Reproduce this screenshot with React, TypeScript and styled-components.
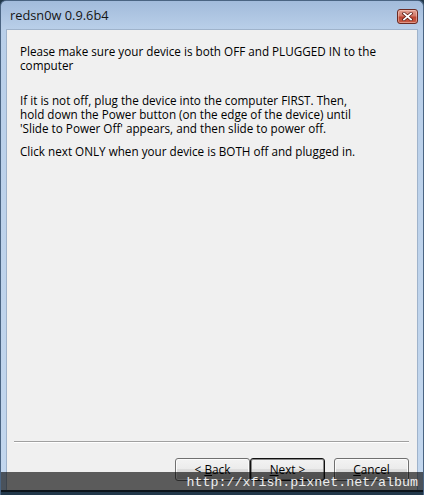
import React from 'react';
import styled, { createGlobalStyle } from 'styled-components';

const Global = createGlobalStyle`
  html, body { margin: 0; padding: 0; background: #22384a; }
  body { width: 424px; height: 495px; overflow: hidden; }
`;

const Window = styled.div`
  position: relative;
  width: 424px;
  height: 495px;
  box-sizing: border-box;
  display: flex;
  flex-direction: column;
  background: linear-gradient(to bottom, #a2bbdb 0px, #b9cfe9 28px, #c3d7ee 100%);
  border: 1px solid #4a6482;
  border-bottom: none;
  border-radius: 6px 6px 0 0;
  overflow: hidden;
`;

const TitleBar = styled.div`
  height: 28px;
  flex: none;
  display: flex;
  align-items: center;
  justify-content: space-between;
  padding: 0 5px 0 9px;
`;

const Title = styled.span`
  font-family: 'Open Sans', 'Noto Sans', sans-serif;
  font-size: 12.8px;
  color: #151515;
  padding-bottom: 1px;
`;

const CloseButton = styled.div`
  width: 21px;
  height: 15px;
  box-sizing: border-box;
  margin-top: 3px;
  border: 1px solid #6b2a22;
  border-radius: 3px;
  background: linear-gradient(to bottom, #e3a193 0%, #d27a69 45%, #bd4531 55%, #c75d47 100%);
  display: flex;
  align-items: center;
  justify-content: center;
  box-shadow: inset 0 0 0 1px rgba(255, 220, 210, 0.45);
`;

const Panel = styled.div`
  flex: 1;
  margin: 0 5px;
  background: #f0f0f0;
  border: 1px solid #9fb3cb;
  border-bottom: none;
  display: flex;
  flex-direction: column;
`;

const Content = styled.div`
  padding: 14px 0 0 13px;
  display: flex;
  flex-direction: column;
`;

const Para = styled.p<{ $gap?: number }>`
  margin: 0;
  margin-top: ${(p) => p.$gap ?? 0}px;
  font-family: 'Open Sans', 'Noto Sans', sans-serif;
  font-size: 11.7px;
  line-height: 14px;
  color: #000;
  white-space: nowrap;
`;

const Footer = styled.div`
  margin-top: auto;
  display: flex;
  flex-direction: column;
  padding: 0 8px 9px 7px;
`;

const Separator = styled.div`
  height: 0;
  border-top: 1px solid #a0a0a0;
  border-bottom: 1px solid #ffffff;
  margin-bottom: 15px;
`;

const ButtonRow = styled.div`
  display: flex;
  justify-content: flex-end;
  align-items: center;
`;

const Button = styled.div<{ $default?: boolean; $gapLeft?: number }>`
  width: 75px;
  height: 23px;
  box-sizing: border-box;
  margin-left: ${(p) => p.$gapLeft ?? 0}px;
  border: 1px solid ${(p) => (p.$default ? '#111' : '#707070')};
  border-radius: 3px;
  background: linear-gradient(to bottom, #f3f3f3 0%, #ebebeb 49%, #dddddd 50%, #cfcfcf 100%);
  box-shadow: inset 0 0 0 1px ${(p) => (p.$default ? '#8a8a8a' : '#fbfbfb')};
  display: flex;
  align-items: center;
  justify-content: center;
  padding-bottom: 2px;
  font-family: 'Open Sans', 'Noto Sans', sans-serif;
  font-size: 11.8px;
  color: #000;
`;

const Watermark = styled.div`
  position: absolute;
  left: -1px;
  right: -1px;
  top: 471px;
  height: 20px;
  background: rgba(0, 0, 0, 0.62);
  display: flex;
  align-items: center;
  justify-content: flex-end;
  padding-right: 6px;
  font-family: 'Liberation Mono', 'Courier New', monospace;
  font-size: 13.3px;
  color: #eeeeee;
`;

const BottomEdge = styled.div`
  height: 5px;
  flex: none;
  background: #22384a;
`;

export default function App() {
  return (
    <>
      <Global />
      <Window>
        <TitleBar>
          <Title>redsn0w 0.9.6b4</Title>
          <CloseButton>
            <svg width="11" height="9" viewBox="0 0 11 9">
              <path d="M2 1.5 L9 7.5 M9 1.5 L2 7.5" stroke="#5a1a12" strokeWidth="3.2" strokeLinecap="square" />
              <path d="M2 1.5 L9 7.5 M9 1.5 L2 7.5" stroke="#ffffff" strokeWidth="1.8" strokeLinecap="square" />
            </svg>
          </CloseButton>
        </TitleBar>
        <Panel>
          <Content>
            <Para>
              Please make sure your device is both OFF and PLUGGED IN to the
              <br />
              computer
            </Para>
            <Para $gap={21}>
              If it is not off, plug the device into the computer FIRST. Then,
              <br />
              hold down the Power button (on the edge of the device) until
              <br />
              'Slide to Power Off' appears, and then slide to power off.
            </Para>
            <Para $gap={9}>Click next ONLY when your device is BOTH off and plugged in.</Para>
          </Content>
          <Footer>
            <Separator />
            <ButtonRow>
              <Button>
                &lt;&nbsp;<u>B</u>ack
              </Button>
              <Button $default>
                <u>N</u>ext &gt;
              </Button>
              <Button $gapLeft={9}>
                <u>C</u>ancel
              </Button>
            </ButtonRow>
          </Footer>
        </Panel>
        <BottomEdge />
        <Watermark>http://xfish.pixnet.net/album</Watermark>
      </Window>
    </>
  );
}
